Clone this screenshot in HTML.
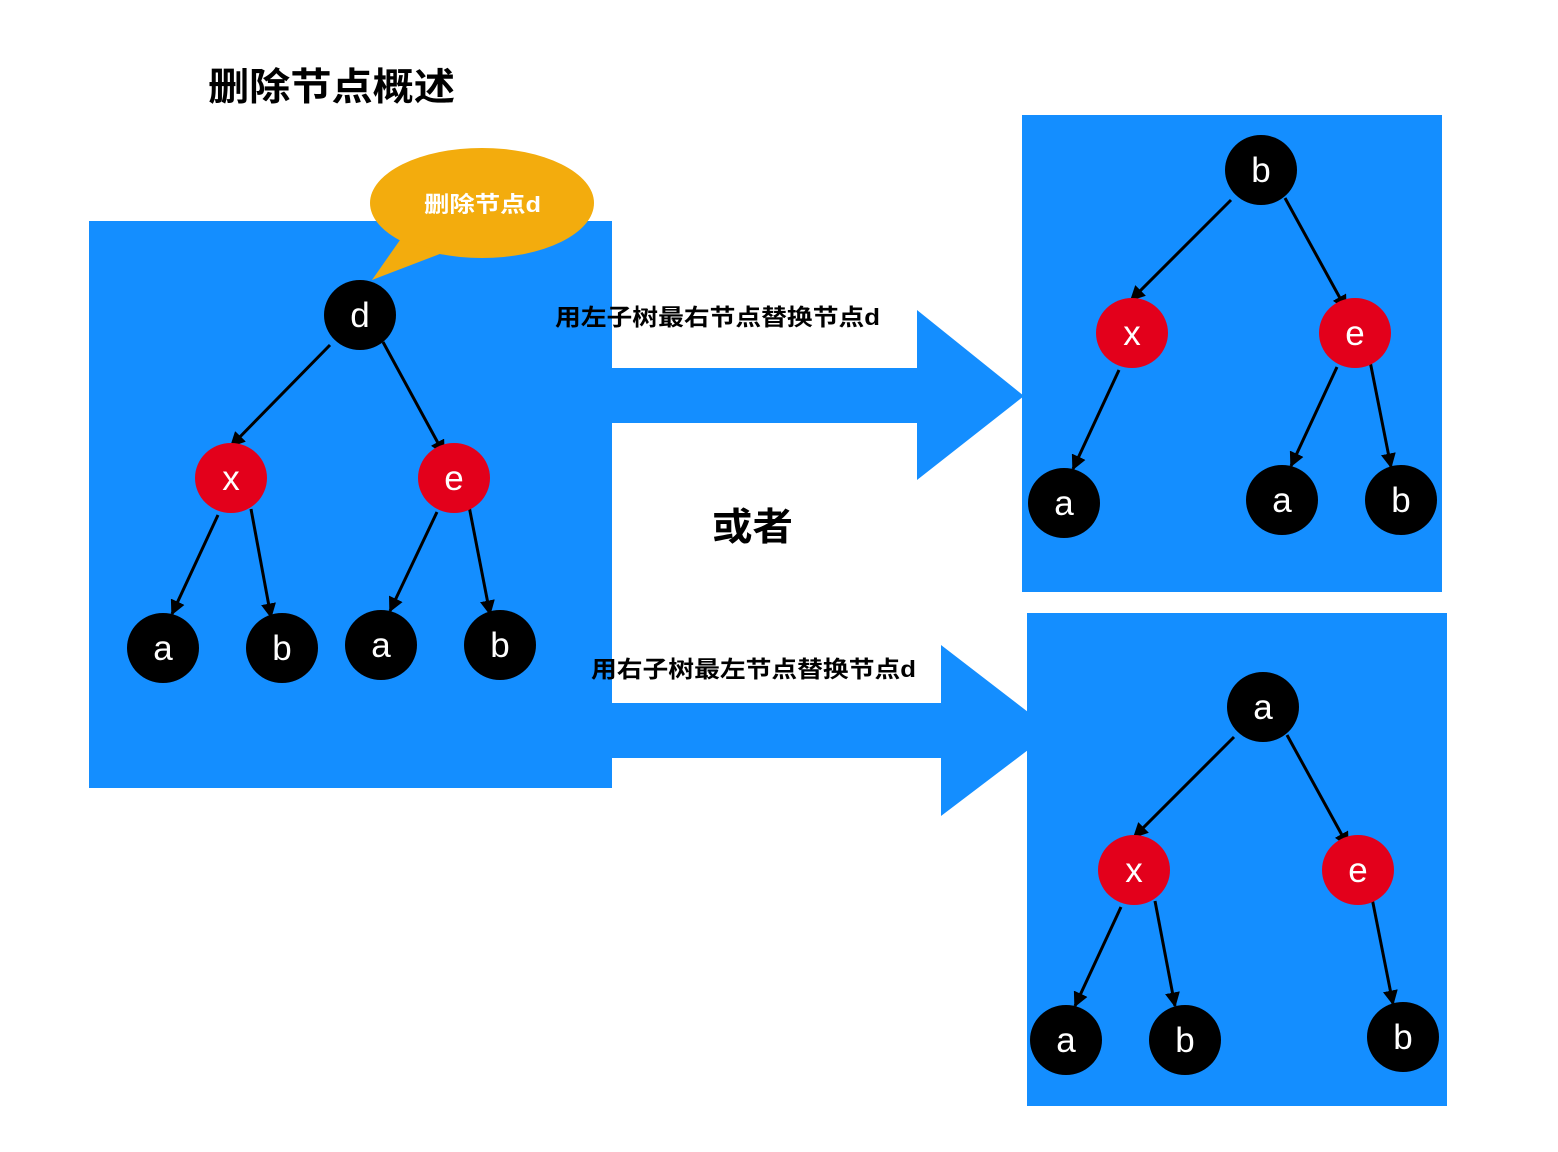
<!DOCTYPE html>
<html><head><meta charset="utf-8"><style>
html,body{margin:0;padding:0;background:#fff;width:1558px;height:1152px;overflow:hidden}
svg{display:block}
.n{font-family:"Liberation Sans",sans-serif;font-size:35px;fill:#fff;text-anchor:middle}
.c{font-family:"Liberation Sans","Noto Sans CJK SC",sans-serif;font-weight:bold}
</style></head><body>
<svg width="1558" height="1152" viewBox="0 0 1558 1152">
<defs><marker id="ah" viewBox="0 0 10 10" refX="9" refY="5" markerWidth="5" markerHeight="5" orient="auto"><path d="M0,0 L10,5 L0,10 z" fill="#000"/></marker></defs>
<g fill="#148EFF">
<rect x="89" y="221" width="523" height="567"/>
<rect x="1022" y="115" width="420" height="477"/>
<rect x="1027" y="613" width="420" height="493"/>
<path d="M612,368 H917 V310 L1024,396 L917,480 V423 H612 z"/>
<path d="M612,703 H941 V645 L1028,712 L1028,750 L941,816 V758 H612 z"/>
</g>
<ellipse cx="482" cy="203" rx="112" ry="55" fill="#F3AC0D"/>
<path d="M372,280 L400,240 L445,252 z" fill="#F3AC0D"/>
<text x="424" y="212" class="c" font-size="22" fill="#fff" font-weight="normal" textLength="117" lengthAdjust="spacingAndGlyphs">删除节点d</text>
<text x="208" y="100" class="c" font-size="38" textLength="247" lengthAdjust="spacingAndGlyphs">删除节点概述</text>
<text x="555" y="325" class="c" font-size="23" textLength="325" lengthAdjust="spacingAndGlyphs">用左子树最右节点替换节点d</text>
<text x="591" y="677" class="c" font-size="23" textLength="325" lengthAdjust="spacingAndGlyphs">用右子树最左节点替换节点d</text>
<text x="712" y="540" class="c" font-size="38" textLength="81" lengthAdjust="spacingAndGlyphs">或者</text>
<g stroke="#000" stroke-width="3" marker-end="url(#ah)">
<line x1="330" y1="345" x2="231" y2="446"/><line x1="383" y1="342" x2="444" y2="454"/>
<line x1="218" y1="515" x2="172" y2="614"/><line x1="251" y1="509" x2="271" y2="617"/>
<line x1="437" y1="512" x2="390" y2="611"/><line x1="469" y1="506" x2="490" y2="614"/>
<line x1="1231" y1="200" x2="1131" y2="300"/><line x1="1285" y1="198" x2="1346" y2="309"/>
<line x1="1119" y1="370" x2="1073" y2="469"/>
<line x1="1337" y1="367" x2="1291" y2="466"/><line x1="1370" y1="361" x2="1391" y2="467"/>
<line x1="1234" y1="737" x2="1134" y2="837"/><line x1="1287" y1="735" x2="1348" y2="846"/>
<line x1="1121" y1="907" x2="1075" y2="1006"/><line x1="1155" y1="901" x2="1175" y2="1006"/>
<line x1="1372" y1="898" x2="1393" y2="1004"/>
</g>
<g>
<ellipse cx="360" cy="315" rx="36" ry="35"/><ellipse cx="231" cy="478" rx="36" ry="35" fill="#E3001B"/><ellipse cx="454" cy="478" rx="36" ry="35" fill="#E3001B"/>
<ellipse cx="163" cy="648" rx="36" ry="35"/><ellipse cx="282" cy="648" rx="36" ry="35"/><ellipse cx="381" cy="645" rx="36" ry="35"/><ellipse cx="500" cy="645" rx="36" ry="35"/>
<ellipse cx="1261" cy="170" rx="36" ry="35"/><ellipse cx="1132" cy="333" rx="36" ry="35" fill="#E3001B"/><ellipse cx="1355" cy="333" rx="36" ry="35" fill="#E3001B"/>
<ellipse cx="1064" cy="503" rx="36" ry="35"/><ellipse cx="1282" cy="500" rx="36" ry="35"/><ellipse cx="1401" cy="500" rx="36" ry="35"/>
<ellipse cx="1263" cy="707" rx="36" ry="35"/><ellipse cx="1134" cy="870" rx="36" ry="35" fill="#E3001B"/><ellipse cx="1358" cy="870" rx="36" ry="35" fill="#E3001B"/>
<ellipse cx="1066" cy="1040" rx="36" ry="35"/><ellipse cx="1185" cy="1040" rx="36" ry="35"/><ellipse cx="1403" cy="1037" rx="36" ry="35"/>
</g>
<g class="n">
<text x="360" y="327">d</text><text x="231" y="490">x</text><text x="454" y="490">e</text>
<text x="163" y="660">a</text><text x="282" y="660">b</text><text x="381" y="657">a</text><text x="500" y="657">b</text>
<text x="1261" y="182">b</text><text x="1132" y="345">x</text><text x="1355" y="345">e</text>
<text x="1064" y="515">a</text><text x="1282" y="512">a</text><text x="1401" y="512">b</text>
<text x="1263" y="719">a</text><text x="1134" y="882">x</text><text x="1358" y="882">e</text>
<text x="1066" y="1052">a</text><text x="1185" y="1052">b</text><text x="1403" y="1049">b</text>
</g>
</svg>
</body></html>
